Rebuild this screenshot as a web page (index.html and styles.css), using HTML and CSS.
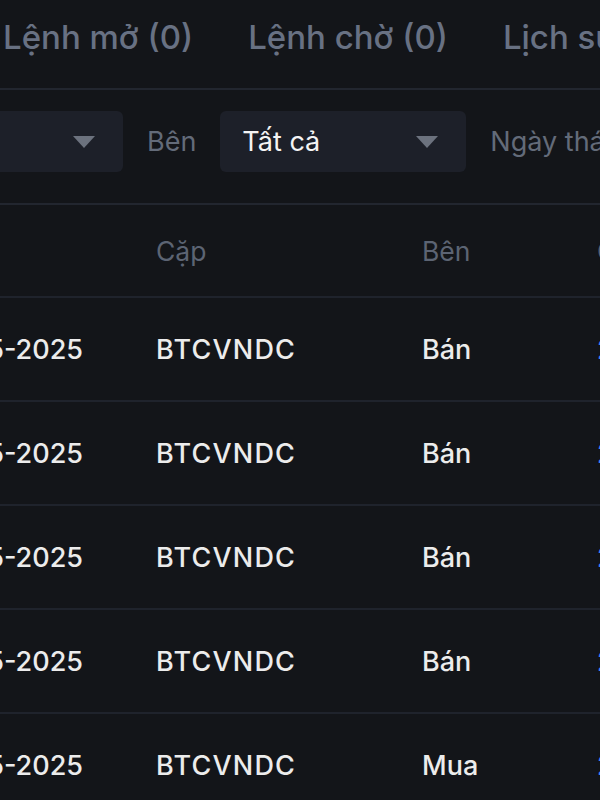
FILE: index.html
```html
<!DOCTYPE html>
<html lang="vi">
<head>
    <meta charset="UTF-8">
    <title>Lịch sử lệnh</title>
    <link rel="stylesheet" href="styles.css">
</head>
<body>
    <div class="page">
        <div class="tabs">
            <div class="tab">Lệnh mở (0)</div>
            <div class="tab">Lệnh chờ (0)</div>
            <div class="tab">Lịch sử lệnh</div>
        </div>

        <div class="filters">
            <div class="select"><span>Tất cả</span><i class="arrow"></i></div>
            <span class="label">Bên</span>
            <div class="select"><span class="value">Tất cả</span><i class="arrow"></i></div>
            <span class="label">Ngày tháng</span>
        </div>

        <div class="table">
            <div class="row head">
                <div class="cell time">Thời gian</div>
                <div class="cell">Cặp</div>
                <div class="cell">Bên</div>
                <div class="cell">Giá</div>
            </div>
            <div class="row">
                <div class="cell date">14:32:08 12-05-2025</div>
                <div class="cell pair">BTCVNDC</div>
                <div class="cell">Bán</div>
                <div class="cell price">2.650.000.000</div>
            </div>
            <div class="row">
                <div class="cell date">14:30:51 12-05-2025</div>
                <div class="cell pair">BTCVNDC</div>
                <div class="cell">Bán</div>
                <div class="cell price">2.650.000.000</div>
            </div>
            <div class="row">
                <div class="cell date">14:28:17 12-05-2025</div>
                <div class="cell pair">BTCVNDC</div>
                <div class="cell">Bán</div>
                <div class="cell price">2.650.000.000</div>
            </div>
            <div class="row">
                <div class="cell date">14:25:40 12-05-2025</div>
                <div class="cell pair">BTCVNDC</div>
                <div class="cell">Bán</div>
                <div class="cell price">2.650.000.000</div>
            </div>
            <div class="row">
                <div class="cell date">14:21:03 12-05-2025</div>
                <div class="cell pair">BTCVNDC</div>
                <div class="cell">Mua</div>
                <div class="cell price">2.640.000.000</div>
            </div>
        </div>
    </div>
</body>
</html>
```

FILE: styles.css
```css
html, body {
    margin: 0;
    padding: 0;
    background-color: #131519;
    overflow: hidden;
}
body {
    font-family: Inter, "Noto Sans", sans-serif;
    color: #ececec;
}
.page {
    margin-left: -300px;
    width: 1600px;
}
.tabs {
    display: flex;
    gap: 55px;
    padding: 17px 0 31px 303px;
    border-bottom: 2px solid #22262f;
}
.tab {
    font-size: 33px;
    line-height: 40px;
    font-weight: 500;
    color: #687183;
    white-space: nowrap;
}
.filters {
    display: flex;
    align-items: center;
    gap: 24px;
    padding: 21px 0 31px 177px;
    border-bottom: 2px solid #22262f;
}
.select {
    width: 246px;
    height: 61px;
    box-sizing: border-box;
    display: flex;
    align-items: center;
    justify-content: space-between;
    padding: 0 28px 0 22px;
    background-color: #1d2029;
    border-radius: 6px;
    font-size: 27px;
    color: #ececec;
}
.select .value {
    color: #f4f4f4;
}
.arrow {
    width: 0;
    height: 0;
    border-left: 11px solid transparent;
    border-right: 11px solid transparent;
    border-top: 12px solid #6c727e;
}
.label {
    font-size: 27px;
    color: #636b79;
    white-space: nowrap;
}
.row {
    display: grid;
    grid-template-columns: 456px 266px 175px 1fr;
    align-items: center;
    height: 102px;
    border-bottom: 2px solid #1f232c;
    font-size: 27px;
    font-weight: 500;
    white-space: nowrap;
}
.row.head {
    height: 91px;
    color: #5c6473;
    font-weight: 400;
    font-size: 26.5px;
}
.cell.time {
    padding-left: 20px;
}
.cell.date {
    text-align: right;
    padding-right: 73px;
}
.cell.pair {
    letter-spacing: 1.2px;
}
.cell.price {
    color: #3b82f6;
}
```
